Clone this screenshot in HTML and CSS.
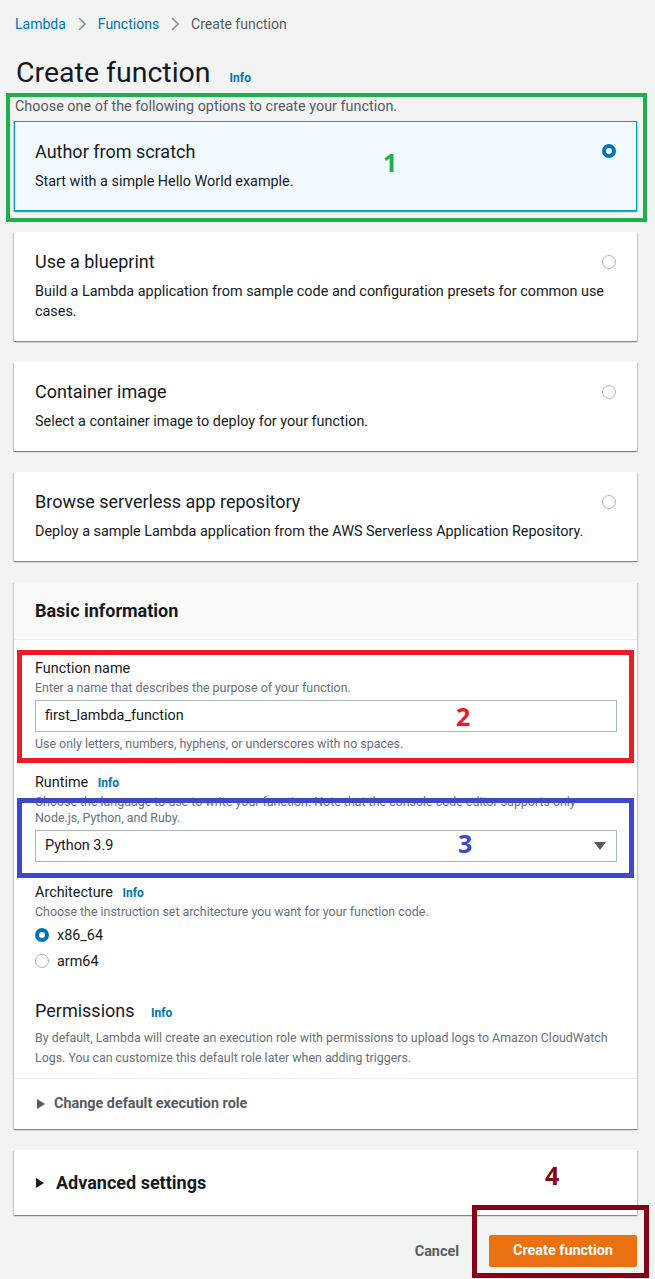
FILE: index.html
```html
<!DOCTYPE html>
<html lang="en">
<head>
<meta charset="utf-8">
<title>Create function</title>
<link rel="stylesheet" href="styles.css">
</head>
<body>
<div class="page">
  <nav class="crumbs">
    <a class="crumb-link">Lambda</a>
    <svg class="chev" viewBox="0 0 10 16" width="10" height="16"><path d="M2 2 L8 8 L2 14" fill="none" stroke="#879596" stroke-width="1.6"/></svg>
    <a class="crumb-link">Functions</a>
    <svg class="chev" viewBox="0 0 10 16" width="10" height="16"><path d="M2 2 L8 8 L2 14" fill="none" stroke="#879596" stroke-width="1.6"/></svg>
    <span class="crumb-current">Create function</span>
  </nav>

  <div class="title-row">
    <h1 class="title">Create function</h1>
    <span class="info">Info</span>
  </div>

  <p class="intro">Choose one of the following options to create your function.</p>

  <div class="options">
    <div class="option selected">
      <div class="option-text">
        <div class="option-title">Author from scratch</div>
        <div class="option-desc">Start with a simple Hello World example.</div>
      </div>
      <span class="radio checked"></span>
    </div>
    <div class="option">
      <div class="option-text">
        <div class="option-title">Use a blueprint</div>
        <div class="option-desc">Build a Lambda application from sample code and configuration presets for common use cases.</div>
      </div>
      <span class="radio"></span>
    </div>
    <div class="option">
      <div class="option-text">
        <div class="option-title">Container image</div>
        <div class="option-desc">Select a container image to deploy for your function.</div>
      </div>
      <span class="radio"></span>
    </div>
    <div class="option">
      <div class="option-text">
        <div class="option-title">Browse serverless app repository</div>
        <div class="option-desc">Deploy a sample Lambda application from the AWS Serverless Application Repository.</div>
      </div>
      <span class="radio"></span>
    </div>
  </div>

  <section class="panel">
    <div class="panel-head">Basic information</div>
    <div class="panel-body">
      <div class="field">
        <div class="label">Function name</div>
        <div class="hint">Enter a name that describes the purpose of your function.</div>
        <div class="input">first_lambda_function</div>
        <div class="hint after">Use only letters, numbers, hyphens, or underscores with no spaces.</div>
      </div>
      <div class="field">
        <div class="label">Runtime <span class="info">Info</span></div>
        <div class="hint">Choose the language to use to write your function. Note that the console code editor supports only Node.js, Python, and Ruby.</div>
        <div class="input select">Python 3.9
          <svg class="caret" viewBox="0 0 12 10" width="12" height="10"><path d="M0 1 L12 1 L6 9 Z" fill="#545b64"/></svg>
        </div>
      </div>
      <div class="field">
        <div class="label">Architecture <span class="info">Info</span></div>
        <div class="hint">Choose the instruction set architecture you want for your function code.</div>
        <div class="radios">
          <div class="radio-row"><span class="radio checked small"></span>x86_64</div>
          <div class="radio-row"><span class="radio small"></span>arm64</div>
        </div>
      </div>
      <div class="perm">
        <div class="perm-title">Permissions <span class="info">Info</span></div>
        <div class="perm-desc">By default, Lambda will create an execution role with permissions to upload logs to Amazon CloudWatch Logs. You can customize this default role later when adding triggers.</div>
      </div>
    </div>
    <div class="expander">
      <svg class="tri" viewBox="0 0 8 10" width="8" height="10"><path d="M0 0 L8 5 L0 10 Z" fill="#545b64"/></svg>
      Change default execution role
    </div>
  </section>

  <section class="panel adv">
    <svg class="tri" viewBox="0 0 8 10" width="8" height="10"><path d="M0 0 L8 5 L0 10 Z" fill="#16191f"/></svg>
    Advanced settings
  </section>

  <div class="actions">
    <span class="cancel">Cancel</span>
    <span class="primary">Create function</span>
  </div>

  <div class="mark mark-green"></div>
  <div class="mark mark-red"></div>
  <div class="mark mark-blue"></div>
  <div class="mark mark-maroon"></div>
  <span class="num num1">1</span>
  <span class="num num2">2</span>
  <span class="num num3">3</span>
  <span class="num num4">4</span>
</div>
</body>
</html>
```

FILE: styles.css
```css
* { box-sizing: border-box; }
html, body { margin: 0; padding: 0; }
body {
  background: #f2f3f3;
  font-family: Roboto, "Liberation Sans", sans-serif;
  color: #16191f;
  font-size: 14.4px;
}
.page {
  position: relative;
  width: 655px;
  min-height: 1279px;
  padding: 13px 18px 0 14px;
}
.crumbs {
  display: flex;
  align-items: center;
  gap: 11px;
  height: 22px;
  padding-left: 1px;
  font-size: 14px;
}
.crumb-link { color: #0073bb; }
.crumb-current { color: #545b64; }
.chev { display: block; }
.title-row {
  display: flex;
  align-items: baseline;
  gap: 19px;
  margin-top: 21px;
  padding-left: 2px;
}
.title {
  margin: 0;
  font-size: 28.5px;
  font-weight: 400;
  line-height: 34px;
  color: #16191f;
}
.info {
  color: #0073bb;
  font-size: 12px;
  font-weight: 700;
}
.intro {
  margin: 8px 0 0 1px;
  font-size: 14.4px;
  line-height: 18px;
  color: #545b64;
}
.options {
  display: flex;
  flex-direction: column;
  gap: 21px;
  margin-top: 5px;
}
.option {
  display: flex;
  align-items: flex-start;
  background: #fff;
  box-shadow: 0 1px 1px 0 rgba(0,28,36,.3), 1px 1px 1px 0 rgba(0,28,36,.15), -1px 1px 1px 0 rgba(0,28,36,.15);
  padding: 18px 20px 19px 21px;
  min-height: 89px;
}
.option.selected {
  background: #f1faff;
  border: 1px solid #00a1c9;
  padding: 18px 19px 16px 20px;
  min-height: 90px;
}
.option-text { flex: 1; min-width: 0; }
.option-title {
  font-size: 18px;
  line-height: 24px;
}
.option-desc {
  margin-top: 8px;
  font-size: 14.4px;
  line-height: 20px;
}
.radio {
  display: block;
  flex: none;
  width: 14px;
  height: 14px;
  margin-top: 5px;
  margin-left: -14px;
  margin-right: 1px;
  border: 1px solid #aab7b8;
  border-radius: 50%;
  background: #fff;
}
.option.selected .radio { margin-top: 4px; }
.radio.checked {
  border: 4px solid #0073bb;
}
.panel {
  margin-top: 21px;
  background: #fff;
  box-shadow: 0 1px 1px 0 rgba(0,28,36,.3), 1px 1px 1px 0 rgba(0,28,36,.15), -1px 1px 1px 0 rgba(0,28,36,.15);
}
.panel-head {
  background: #fafafa;
  border-bottom: 1px solid #eaeded;
  padding: 17px 20px 16px 21px;
  font-size: 18px;
  font-weight: 700;
  line-height: 24px;
}
.panel-body {
  padding: 20px 20px 10px 21px;
}
.field + .field { margin-top: 22px; }
.label {
  font-size: 14.4px;
  line-height: 18px;
}
.label .info { margin-left: 6px; }
.hint {
  font-size: 12.4px;
  line-height: 16px;
  color: #687078;
  margin-top: 2px;
}
.hint.after { margin-top: 4px; }
.input {
  position: relative;
  margin-top: 4px;
  height: 32px;
  border: 1px solid #aab7b8;
  padding: 0 9px;
  font-size: 14.4px;
  line-height: 30px;
  color: #16191f;
  background: #fff;
}
.caret {
  position: absolute;
  right: 10px;
  top: 10px;
}
.radios { margin-top: 2px; }
.radio-row {
  display: flex;
  align-items: center;
  gap: 8px;
  height: 26px;
  font-size: 14.4px;
}
.radio.small { margin: 0; }
.perm { margin-top: 25px; }
.perm-title {
  font-size: 18px;
  line-height: 24px;
}
.perm-title .info { margin-left: 12px; }
.perm-desc {
  margin-top: 3px;
  font-size: 12.4px;
  line-height: 20px;
  color: #687078;
}
.expander {
  display: flex;
  align-items: center;
  gap: 9px;
  border-top: 1px solid #eaeded;
  padding: 16px 20px 16px 23px;
  font-size: 14.4px;
  font-weight: 700;
  color: #545b64;
  line-height: 18px;
}
.panel.adv {
  display: flex;
  align-items: center;
  gap: 12px;
  height: 65px;
  padding: 0 22px;
  font-size: 18px;
  font-weight: 700;
}
.actions {
  display: flex;
  justify-content: flex-end;
  align-items: center;
  gap: 30px;
  margin-top: 20px;
}
.cancel {
  font-weight: 700;
  color: #545b64;
  font-size: 14.4px;
}
.primary {
  background: #ec7211;
  color: #fff;
  font-weight: 700;
  font-size: 14.4px;
  height: 32px;
  line-height: 32px;
  border-radius: 2px;
  width: 148px;
  text-align: center;
}
.mark {
  position: absolute;
  pointer-events: none;
}
.mark-green { left: 6px; top: 93px; width: 641px; height: 129px; border: 4px solid #1eb04a; }
.mark-red { left: 17px; top: 650px; width: 617px; height: 113px; border: 5px solid #ec1c24; }
.mark-blue { left: 17px; top: 798px; width: 617px; height: 80px; border: 5px solid #3f48cc; }
.mark-maroon { left: 472px; top: 1205px; width: 177px; height: 73px; border: 5px solid #880015; }
.num {
  position: absolute;
  font-family: "Open Sans", sans-serif;
  font-weight: 700;
  font-size: 25px;
  line-height: 25px;
}
.num1 { left: 383px; top: 150px; color: #1eb04a; }
.num2 { left: 456px; top: 704px; color: #ec1c24; }
.num3 { left: 458px; top: 831px; color: #3f48cc; }
.num4 { left: 545px; top: 1163px; color: #880015; }
```
